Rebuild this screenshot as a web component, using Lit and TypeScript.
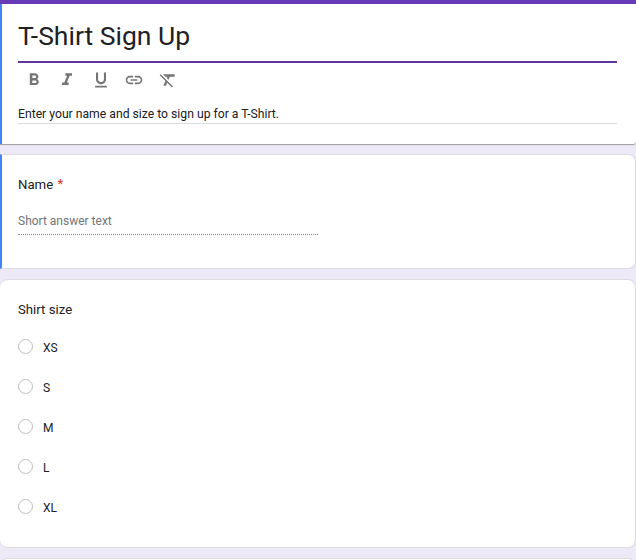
import { LitElement, html, css, svg } from 'lit';
import { customElement } from 'lit/decorators.js';

const ICONS = [
  'M15.6 10.79c.97-.67 1.65-1.77 1.65-2.79 0-2.26-1.75-4-4-4H7v14h7.04c2.09 0 3.71-1.7 3.71-3.79 0-1.52-.86-2.82-2.15-3.42zM10 6.5h3c.83 0 1.5.67 1.5 1.5s-.67 1.5-1.5 1.5h-3v-3zm3.5 9H10v-3h3.5c.83 0 1.5.67 1.5 1.5s-.67 1.5-1.5 1.5z',
  'M10 4v3h2.21l-3.42 8H6v3h8v-3h-2.21l3.42-8H18V4z',
  'M12 17c3.31 0 6-2.69 6-6V3h-2.5v8c0 1.93-1.57 3.5-3.5 3.5S8.5 12.93 8.5 11V3H6v8c0 3.31 2.69 6 6 6zm-7 2v2h14v-2H5z',
  'M3.9 12c0-1.71 1.39-3.1 3.1-3.1h4V7H7c-2.76 0-5 2.24-5 5s2.24 5 5 5h4v-1.9H7c-1.71 0-3.1-1.39-3.1-3.1zM8 13h8v-2H8v2zm9-6h-4v1.9h4c1.71 0 3.1 1.39 3.1 3.1s-1.39 3.1-3.1 3.1h-4V17h4c2.76 0 5-2.24 5-5s-2.24-5-5-5z',
  'M3.27 5L2 6.27l6.97 6.97L6.5 19h3l1.57-3.66L16.73 21 18 19.73 3.55 5.27 3.27 5zM6 5v.18L8.82 8h2.4l-.72 1.68 2.1 2.1L14.21 8H20V5H6z',
];

const SIZES = ['XS', 'S', 'M', 'L', 'XL'];

@customElement('app-root')
export class AppRoot extends LitElement {
  static styles = css`
    :host {
      display: block;
      height: 560px;
      overflow: hidden;
      background: #ede9f7;
      font-family: Roboto, 'Liberation Sans', sans-serif;
      color: #202124;
    }
    .topbar { height: 4px; background: #673ab7; }
    .card {
      box-sizing: border-box;
      background: #fff;
      border-radius: 0 8px 8px 0;
      border: 1px solid #dadce0;
      border-left: none;
      padding: 0 18px;
    }
    .accent { border-left: 2px solid #4285f4; padding-left: 16px; }
    .header {
      height: 140px;
      border: none;
      border-left: 2px solid #4285f4;
      border-radius: 0 0 3px 0;
      box-shadow: 0 1px 1px 0 #9a9a9a;
      padding-top: 14px;
      padding-left: 16px;
      padding-right: 19px;
    }
    .title {
      font-size: 26.5px;
      line-height: 36px;
      height: 43px;
      box-sizing: content-box;
      border-bottom: 2px solid #5e35a0;
    }
    .toolbar { display: flex; gap: 13.4px; margin-top: 7px; padding-left: 6px; }
    .toolbar svg { width: 20px; height: 20px; fill: #757575; display: block; }
    .desc {
      margin-top: 15px;
      font-size: 12.2px;
      line-height: 18px;
      height: 18px;
      border-bottom: 1px solid #dadce0;
    }
    .name { height: 115px; margin-top: 10px; padding-top: 21px; }
    .label { font-size: 13.2px; line-height: 18px; height: 18px; }
    .req { color: #d93025; margin-left: 1px; vertical-align: 1px; line-height: 0; }
    .answer {
      width: 300px;
      margin-top: 18px;
      height: 22px;
      font-size: 12px;
      line-height: 18px;
      color: #70757a;
      border-bottom: 1px dotted #80868b;
    }
    .size { height: 269px; margin-top: 10px; padding-top: 21px; border-radius: 8px; }
    .options { display: flex; flex-direction: column; gap: 20px; margin-top: 19px; }
    .option { display: flex; align-items: center; gap: 10px; height: 20px; font-size: 12px; }
    .radio {
      box-sizing: border-box;
      width: 15px;
      height: 15px;
      margin-bottom: 4px;
      border: 1px solid #bdbdbd;
      border-radius: 50%;
    }
    .next { height: 20px; margin-top: 10px; border-radius: 8px; }
  `;

  render() {
    return html`
      <div class="topbar"></div>
      <section class="card header">
        <div class="title">T-Shirt Sign Up</div>
        <div class="toolbar">
          ${ICONS.map(d => html`<svg viewBox="0 0 24 24">${svg`<path d=${d}></path>`}</svg>`)}
        </div>
        <div class="desc">Enter your name and size to sign up for a T-Shirt.</div>
      </section>
      <section class="card accent name">
        <div class="label">Name <span class="req">*</span></div>
        <div class="answer">Short answer text</div>
      </section>
      <section class="card size">
        <div class="label">Shirt size</div>
        <div class="options">
          ${SIZES.map(s => html`<div class="option"><span class="radio"></span>${s}</div>`)}
        </div>
      </section>
      <section class="card next"></section>
    `;
  }
}
